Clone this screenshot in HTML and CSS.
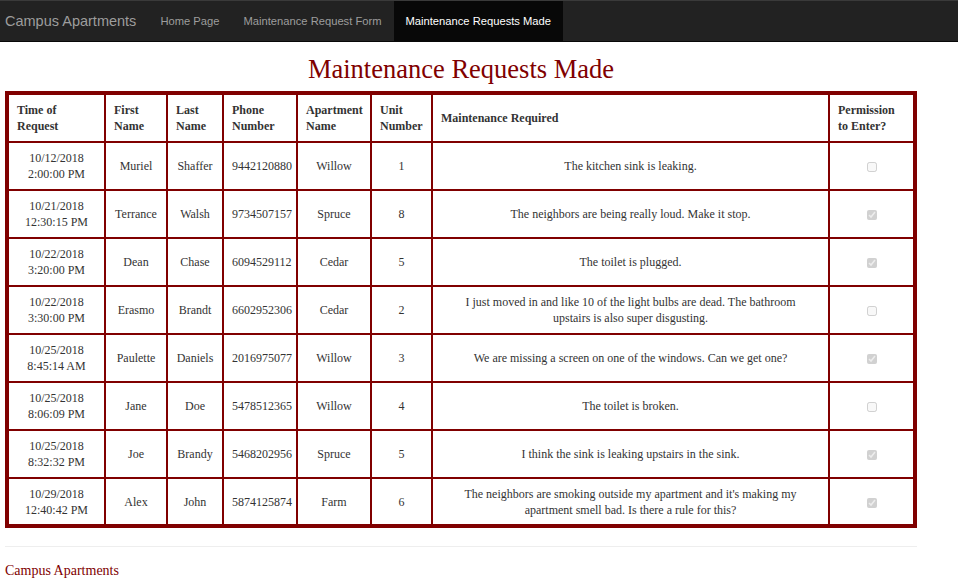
FILE: index.html
```html
<!DOCTYPE html>
<html>
<head>
<meta charset="utf-8">
<title>Maintenance Requests Made</title>
<link rel="stylesheet" href="styles.css">
</head>
<body>
<nav class="navbar">
  <a class="brand" href="#">Campus Apartments</a>
  <ul class="nav">
    <li><a href="#">Home Page</a></li>
    <li><a href="#">Maintenance Request Form</a></li>
    <li class="active"><a href="#">Maintenance Requests Made</a></li>
  </ul>
</nav>
<main class="container">
  <h1 class="title">Maintenance Requests Made</h1>
  <table class="requests">
    <colgroup>
      <col class="c-time"><col class="c-first"><col class="c-last"><col class="c-phone"><col class="c-apt"><col class="c-unit"><col class="c-maint"><col class="c-perm">
    </colgroup>
    <thead>
      <tr>
        <th>Time of Request</th><th>First Name</th><th>Last Name</th><th>Phone Number</th><th>Apartment Name</th><th>Unit Number</th><th>Maintenance Required</th><th>Permission to Enter?</th>
      </tr>
    </thead>
    <tbody>
      <tr><td>10/12/2018<br>2:00:00 PM</td><td>Muriel</td><td>Shaffer</td><td>9442120880</td><td>Willow</td><td>1</td><td class="maint">The kitchen sink is leaking.</td><td><input type="checkbox" disabled></td></tr>
      <tr><td>10/21/2018<br>12:30:15 PM</td><td>Terrance</td><td>Walsh</td><td>9734507157</td><td>Spruce</td><td>8</td><td class="maint">The neighbors are being really loud. Make it stop.</td><td><input type="checkbox" disabled checked></td></tr>
      <tr><td>10/22/2018<br>3:20:00 PM</td><td>Dean</td><td>Chase</td><td>6094529112</td><td>Cedar</td><td>5</td><td class="maint">The toilet is plugged.</td><td><input type="checkbox" disabled checked></td></tr>
      <tr><td>10/22/2018<br>3:30:00 PM</td><td>Erasmo</td><td>Brandt</td><td>6602952306</td><td>Cedar</td><td>2</td><td class="maint">I just moved in and like 10 of the light bulbs are dead. The bathroom upstairs is also super disgusting.</td><td><input type="checkbox" disabled></td></tr>
      <tr><td>10/25/2018<br>8:45:14 AM</td><td>Paulette</td><td>Daniels</td><td>2016975077</td><td>Willow</td><td>3</td><td class="maint">We are missing a screen on one of the windows. Can we get one?</td><td><input type="checkbox" disabled checked></td></tr>
      <tr><td>10/25/2018<br>8:06:09 PM</td><td>Jane</td><td>Doe</td><td>5478512365</td><td>Willow</td><td>4</td><td class="maint">The toilet is broken.</td><td><input type="checkbox" disabled></td></tr>
      <tr><td>10/25/2018<br>8:32:32 PM</td><td>Joe</td><td>Brandy</td><td>5468202956</td><td>Spruce</td><td>5</td><td class="maint">I think the sink is leaking upstairs in the sink.</td><td><input type="checkbox" disabled checked></td></tr>
      <tr><td>10/29/2018<br>12:40:42 PM</td><td>Alex</td><td>John</td><td>5874125874</td><td>Farm</td><td>6</td><td class="maint">The neighbors are smoking outside my apartment and it's making my apartment smell bad. Is there a rule for this?</td><td><input type="checkbox" disabled checked></td></tr>
    </tbody>
  </table>
  <hr class="rule">
  <footer class="footer">Campus Apartments</footer>
</main>
</body>
</html>
```
FILE: styles.css
```css
* { box-sizing: border-box; }
html, body { margin: 0; padding: 0; background: #fff; }
body {
  font-family: "Liberation Serif", "Times New Roman", serif;
  color: #333;
  font-size: 12px;
}
.navbar {
  display: flex;
  align-items: stretch;
  height: 42px;
  background: #222;
  border-top: 1px solid #3a3a3a;
  border-bottom: 1px solid #080808;
  font-family: "Liberation Sans", Arial, sans-serif;
}
.brand {
  display: flex;
  align-items: center;
  padding: 0 12px 0 5px;
  font-size: 14.5px;
  color: #9d9d9d;
  text-decoration: none;
}
.nav {
  display: flex;
  list-style: none;
  margin: 0;
  padding: 0;
}
.nav li { display: flex; }
.nav a {
  display: flex;
  align-items: center;
  padding: 0 12px;
  font-size: 11.2px;
  color: #9d9d9d;
  text-decoration: none;
}
.nav .active a {
  background: #080808;
  color: #fff;
}
.container {
  width: 912px;
  margin-left: 5px;
}
.title {
  margin: 12px 0 7px;
  text-align: center;
  font-weight: normal;
  font-size: 26.5px;
  line-height: 30px;
  color: #800000;
}
.requests {
  width: 912px;
  table-layout: fixed;
  border-collapse: collapse;
  border: 4px solid #800000;
}
.c-time { width: 98px; }
.c-first { width: 62px; }
.c-last { width: 56px; }
.c-phone { width: 74px; }
.c-apt { width: 74px; }
.c-unit { width: 61px; }
.c-maint { width: 397px; }
.c-perm { width: 86px; }
.requests th, .requests td {
  border: 2px solid #800000;
  padding: 0 8px;
  line-height: 16px;
  vertical-align: middle;
}
.requests th {
  height: 49px;
  text-align: left;
  font-weight: bold;
}
.requests td {
  height: 48px;
  text-align: center;
}
.requests td.maint {
  padding: 0 14px;
}
.requests input[type="checkbox"] {
  width: 10px;
  height: 10px;
  margin: 0;
  vertical-align: middle;
}
.rule {
  margin: 18px 0 16px;
  border: 0;
  border-top: 1px solid #eee;
}
.footer {
  color: #800000;
  font-size: 14px;
}
```
